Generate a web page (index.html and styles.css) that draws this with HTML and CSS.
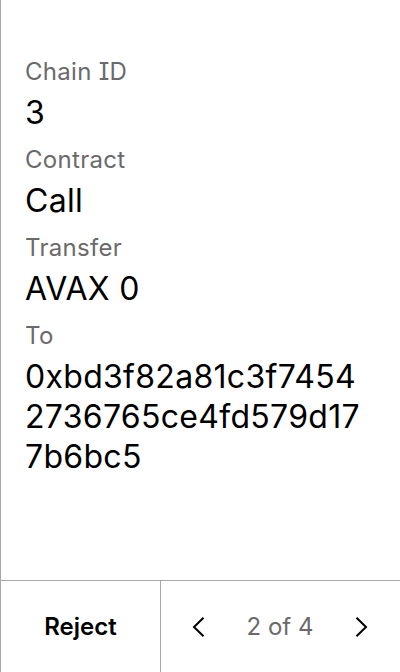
FILE: index.html
```html
<!DOCTYPE html>
<html lang="en">
<head>
<meta charset="utf-8">
<title>Review transaction</title>
<link rel="stylesheet" href="styles.css">
</head>
<body>
<div class="screen">
  <main class="content">
    <div class="field">
      <div class="label">Chain ID</div>
      <div class="value">3</div>
    </div>
    <div class="field">
      <div class="label">Contract</div>
      <div class="value">Call</div>
    </div>
    <div class="field">
      <div class="label">Transfer</div>
      <div class="value">AVAX 0</div>
    </div>
    <div class="field">
      <div class="label">To</div>
      <div class="value address">0xbd3f82a81c3f74542736765ce4fd579d177b6bc5</div>
    </div>
  </main>
  <footer class="footer">
    <div class="reject">Reject</div>
    <div class="pager">
      <svg class="chev" viewBox="0 0 24 24" width="24" height="24"><polyline points="16.5,2.8 7,12 16.5,21.2" fill="none" stroke="#000" stroke-width="2"/></svg>
      <span class="count">2 of 4</span>
      <svg class="chev" viewBox="0 0 24 24" width="24" height="24"><polyline points="7.5,2.8 17,12 7.5,21.2" fill="none" stroke="#000" stroke-width="2"/></svg>
    </div>
  </footer>
</div>
</body>
</html>
```
FILE: styles.css
```css
html, body {
  margin: 0;
  padding: 0;
  background: #fff;
}
body {
  font-family: Inter, "Noto Sans", sans-serif;
  font-optical-sizing: none;
  font-feature-settings: "cv08" 1;
  color: #000;
}
.screen {
  width: 400px;
  height: 672px;
  box-sizing: border-box;
  border-left: 1px solid #a8a8a8;
  display: flex;
  flex-direction: column;
}
.content {
  flex: 1;
  padding: 56px 32px 0 24px;
  display: flex;
  flex-direction: column;
  gap: 11px;
}
.field {
  display: flex;
  flex-direction: column;
  gap: 5px;
}
.label {
  font-size: 24px;
  line-height: 32px;
  letter-spacing: 0.3px;
  color: #6a6a6a;
}
.value {
  font-size: 32px;
  line-height: 40px;
  letter-spacing: 0.3px;
  color: #000;
}
.address {
  word-break: break-all;
}
.footer {
  height: 92px;
  flex: none;
  box-sizing: border-box;
  border-top: 1px solid #a8a8a8;
  display: flex;
}
.reject {
  width: 160px;
  box-sizing: border-box;
  border-right: 1px solid #a8a8a8;
  display: flex;
  align-items: center;
  justify-content: center;
  font-size: 24px;
  font-weight: 600;
}
.pager {
  flex: 1;
  display: flex;
  align-items: center;
  justify-content: space-between;
  padding: 0 27px 0 26px;
}
.count {
  font-size: 24px;
  color: #6a6a6a;
}
.chev {
  display: block;
}
```
